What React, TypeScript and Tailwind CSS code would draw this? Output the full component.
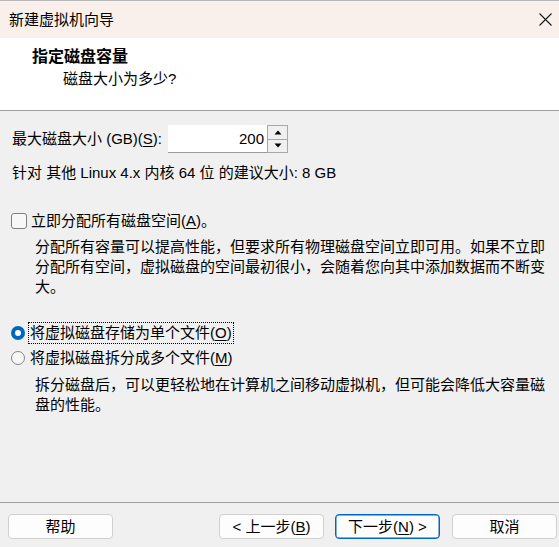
const font = "font-['Liberation_Sans','Noto_Sans_CJK_SC',sans-serif]";

function Mn({ children }: { children: string }) {
  return <span className="underline underline-offset-2 decoration-1">{children}</span>;
}

function Radio({ checked }: { checked?: boolean }) {
  if (checked) {
    return (
      <span className="w-[14px] h-[14px] rounded-full bg-[#0067c0] flex items-center justify-center shrink-0">
        <span className="w-[6px] h-[6px] rounded-full bg-white"></span>
      </span>
    );
  }
  return <span className="w-[14px] h-[14px] rounded-full border border-[#858585] bg-[#f7f7f7] shrink-0"></span>;
}

function Btn({ children, primary }: { children: React.ReactNode; primary?: boolean }) {
  return (
    <div
      className={
        "w-[105px] h-[25px] rounded-[4px] border flex items-center justify-center bg-[#fdfdfd] text-[15px] leading-[20px] " +
        (primary ? "border-[#0067c0] shadow-[inset_0_0_0_0.5px_#0067c0]" : "border-[#d0d0d0]")
      }
    >
      {children}
    </div>
  );
}

export default function App() {
  return (
    <div className={`w-[559px] h-[547px] flex flex-col bg-[#f0f0f0] text-black ${font}`}>
      {/* title bar */}
      <div className="h-[38px] shrink-0 bg-[#f9f0eb] border-t border-[#b8b8b8] flex items-center justify-between pl-[9px] pr-[7px]">
        <span className="text-[15px] leading-[20px]">新建虚拟机向导</span>
        <svg width="13" height="13" viewBox="0 0 13 13" className="mr-[0px]">
          <path d="M0.5 0.5 L12.5 12.5 M12.5 0.5 L0.5 12.5" stroke="#1a1a1a" strokeWidth="1.1" />
        </svg>
      </div>

      {/* header */}
      <div className="h-[72px] shrink-0 bg-white pt-[8px]">
        <div className="pl-[32px] text-[16px] leading-[22px] font-bold">指定磁盘容量</div>
        <div className="pl-[63px] text-[15px] leading-[22px]">磁盘大小为多少?</div>
      </div>
      <div className="h-px shrink-0 bg-[#a0a0a0]"></div>

      {/* body */}
      <div className="flex-1 pl-[11px] text-[15px] leading-[20px]">
        <div className="mt-[14px] h-[28px] flex items-center pl-[1px]">
          <span>
            最大磁盘大小 (GB)(<Mn>S</Mn>):
          </span>
          <div className="ml-[6px] flex h-[28px]">
            <div className="w-[99px] h-[28px] bg-white border-b border-[#9a9a9a] flex items-center justify-end pr-[3px]">
              200
            </div>
            <div className="w-[21px] flex flex-col border border-[#a8a8a8] bg-[#a8a8a8] gap-px">
              <div className="flex-1 bg-[#f0f0f0] flex items-center justify-center">
                <svg width="8" height="5" viewBox="0 0 8 5">
                  <path d="M0.5 4.5 L4 0.5 L7.5 4.5 Z" fill="#000" />
                </svg>
              </div>
              <div className="flex-1 bg-[#f0f0f0] flex items-center justify-center">
                <svg width="8" height="5" viewBox="0 0 8 5">
                  <path d="M0.5 0.5 L4 4.5 L7.5 0.5 Z" fill="#000" />
                </svg>
              </div>
            </div>
          </div>
        </div>

        <div className="mt-[10px] pl-[1px]">针对 其他 Linux 4.x 内核 64 位 的建议大小: 8 GB</div>

        <div className="mt-[28px] flex items-center gap-[4px]">
          <span className="w-[16px] h-[16px] rounded-[3px] border border-[#7f7f7f] bg-[#f7f7f7] shrink-0"></span>
          <span>
            立即分配所有磁盘空间(<Mn>A</Mn>)。
          </span>
        </div>
        <p className="mt-[6px] ml-[24px] w-[514px]">
          分配所有容量可以提高性能，但要求所有物理磁盘空间立即可用。如果不立即分配所有空间，虚拟磁盘的空间最初很小，会随着您向其中添加数据而不断变大。
        </p>

        <div className="mt-[26px] flex items-center gap-[5px]">
          <Radio checked />
          <span className="outline outline-1 outline-dotted outline-black -ml-[1px] pl-[1px] pr-[1px]">
            将虚拟磁盘存储为单个文件(<Mn>O</Mn>)
          </span>
        </div>
        <div className="mt-[5px] flex items-center gap-[5px]">
          <Radio />
          <span>
            将虚拟磁盘拆分成多个文件(<Mn>M</Mn>)
          </span>
        </div>
        <p className="mt-[7px] ml-[24px] w-[514px]">
          拆分磁盘后，可以更轻松地在计算机之间移动虚拟机，但可能会降低大容量磁盘的性能。
        </p>
      </div>

      {/* footer */}
      <div className="h-px shrink-0 bg-[#a0a0a0]"></div>
      <div className="h-[44px] shrink-0 flex items-start pt-[11px] pl-[8px] pr-[2px]">
        <Btn>帮助</Btn>
        <div className="ml-auto flex gap-[11px]">
          <Btn>
            &lt; 上一步(<Mn>B</Mn>)
          </Btn>
          <Btn primary>
            下一步(<Mn>N</Mn>) &gt;
          </Btn>
        </div>
        <div className="ml-[12px]">
          <Btn>取消</Btn>
        </div>
      </div>
    </div>
  );
}
